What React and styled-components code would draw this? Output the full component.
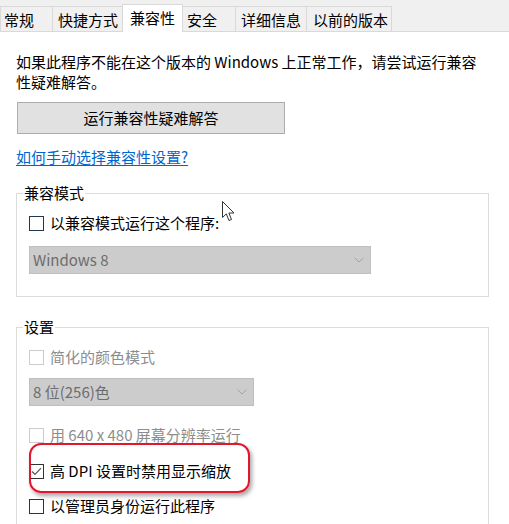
import React from "react";
import styled, { createGlobalStyle } from "styled-components";

const Global = createGlobalStyle`
  html, body { margin: 0; padding: 0; background: #fff; }
  body {
    font-family: "Microsoft YaHei", "Noto Sans CJK SC", sans-serif;
    font-size: 15px;
    color: #000;
  }
`;

const Window = styled.div`
  position: relative;
  width: 509px;
  height: 524px;
  overflow: hidden;
  background: #fff;
`;

const TabBar = styled.div`
  display: flex;
  align-items: flex-end;
  height: 32px;
  box-sizing: border-box;
  background: #f0f0f0;
  border-bottom: 1px solid #d9d9d9;
`;

const Tab = styled.div`
  box-sizing: border-box;
  width: ${(p) => p.$w}px;
  height: ${(p) => (p.$active ? 28 : 25)}px;
  margin-left: ${(p) => (p.$first ? 0 : -1)}px;
  margin-bottom: ${(p) => (p.$active ? -1 : 0)}px;
  padding: 3px 0 0 ${(p) => p.$pl}px;
  line-height: 20px;
  white-space: nowrap;
  background: ${(p) => (p.$active ? "#fff" : "#f0f0f0")};
  border: 1px solid #d9d9d9;
  border-bottom: none;
  position: relative;
  z-index: ${(p) => (p.$active ? 1 : 0)};
`;

const Content = styled.div`
  padding: 20px 20px 0 16px;
`;

const Para = styled.p`
  margin: 0;
  line-height: 20px;
`;

const Button = styled.div`
  box-sizing: border-box;
  margin: 10px 0 0 1px;
  width: 268px;
  height: 32px;
  display: flex;
  align-items: center;
  justify-content: center;
  background: #e1e1e1;
  border: 1px solid #adadad;
  line-height: 20px;
`;

const LinkRow = styled.div`
  margin-top: 13px;
  line-height: 20px;
`;

const Link = styled.a`
  color: #0066cc;
  text-decoration: underline;
  text-underline-offset: 2px;
`;

const Group = styled.fieldset`
  margin: ${(p) => p.$mt}px 0 0 0;
  min-width: 0;
  padding: 0 12px ${(p) => p.$pb}px 12px;
  border: 1px solid #dcdcdc;
`;

const Legend = styled.legend`
  margin-left: -6px;
  padding: 0 1px;
  line-height: 20px;
  font-size: 15px;
`;

const Row = styled.div`
  display: flex;
  align-items: center;
  gap: 6px;
  height: 20px;
  margin-top: ${(p) => p.$mt}px;
  line-height: 20px;
  white-space: nowrap;
  color: ${(p) => (p.$disabled ? "#8d8d8d" : "#000")};
`;

const Box = styled.span`
  box-sizing: border-box;
  flex: none;
  width: 15px;
  height: 15px;
  display: flex;
  align-items: center;
  justify-content: center;
  background: #fff;
  border: 1px solid ${(p) => (p.$disabled ? "#cccccc" : p.$hover ? "#1f3850" : "#333333")};
`;

const Select = styled.div`
  box-sizing: border-box;
  margin-top: ${(p) => p.$mt}px;
  width: ${(p) => p.$w}px;
  height: 28px;
  display: flex;
  align-items: center;
  justify-content: space-between;
  padding: 0 6px 0 3px;
  background: #cccccc;
  border: 1px solid #bfbfbf;
  color: #6d6d6d;
  line-height: 20px;
`;

const Highlight = styled.div`
  position: absolute;
  left: 29px;
  top: 443px;
  width: 221px;
  height: 50px;
  box-sizing: border-box;
  border: 2px solid #e3162d;
  border-radius: 12px;
  box-shadow: 2px 3px 4px rgba(0, 0, 0, 0.35);
  pointer-events: none;
`;

const Cursor = styled.svg`
  position: absolute;
  left: 222px;
  top: 201px;
`;

const Chevron = () => (
  <svg width="10" height="6" viewBox="0 0 10 6">
    <path d="M0.5 0.8 L5 5 L9.5 0.8" fill="none" stroke="#a3a3a3" strokeWidth="1" />
  </svg>
);

const Check = () => (
  <svg width="13" height="13" viewBox="0 0 13 13">
    <path d="M2 6.5 L5 9.5 L11 3.2" fill="none" stroke="#555" strokeWidth="1.2" />
  </svg>
);

const tabs = [
  { label: "常规", w: 53, pl: 3 },
  { label: "快捷方式", w: 71, pl: 5 },
  { label: "兼容性", w: 61, pl: 7, active: true },
  { label: "安全", w: 54, pl: 4 },
  { label: "详细信息", w: 72, pl: 5 },
  { label: "以前的版本", w: 86, pl: 6 },
];

export default function App() {
  return (
    <>
      <Global />
      <Window>
        <TabBar>
          {tabs.map((t, i) => (
            <Tab key={t.label} $w={t.w} $pl={t.pl} $active={t.active} $first={i === 0}>
              {t.label}
            </Tab>
          ))}
        </TabBar>
        <Content>
          <Para>
            如果此程序不能在这个版本的 Windows 上正常工作，请尝试运行兼容
            <br />
            性疑难解答。
          </Para>
          <Button>运行兼容性疑难解答</Button>
          <LinkRow>
            <Link href="#">如何手动选择兼容性设置?</Link>
          </LinkRow>
          <Group $mt={16} $pb={22}>
            <Legend>兼容模式</Legend>
            <Row $mt={10}>
              <Box $hover />
              以兼容模式运行这个程序:
            </Row>
            <Select $mt={13} $w={342}>
              Windows 8
              <Chevron />
            </Select>
          </Group>
          <Group $mt={20} $pb={20}>
            <Legend>设置</Legend>
            <Row $mt={10} $disabled>
              <Box $disabled />
              简化的颜色模式
            </Row>
            <Select $mt={11} $w={225}>
              8 位(256)色
              <Chevron />
            </Select>
            <Row $mt={19} $disabled>
              <Box $disabled />
              用 640 x 480 屏幕分辨率运行
            </Row>
            <Row $mt={16}>
              <Box>
                <Check />
              </Box>
              高 DPI 设置时禁用显示缩放
            </Row>
            <Row $mt={15}>
              <Box />
              以管理员身份运行此程序
            </Row>
          </Group>
        </Content>
        <Highlight />
        <Cursor width="14" height="22" viewBox="0 0 14 22">
          <path
            d="M0.5 0.5 L0.5 16.5 L4.3 12.9 L7 19.5 L9.5 18.5 L6.9 12 L12 12 Z"
            fill="#fff"
            stroke="#333"
            strokeWidth="1"
            strokeLinejoin="round"
          />
        </Cursor>
      </Window>
    </>
  );
}
